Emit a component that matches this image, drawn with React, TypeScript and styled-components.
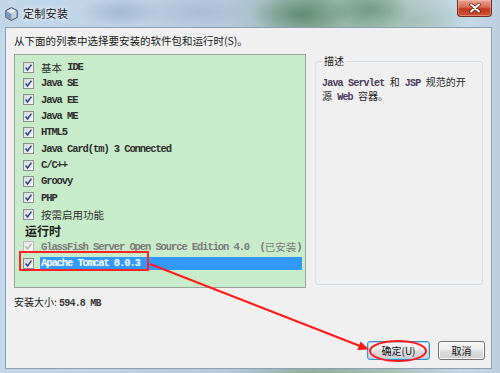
import React from 'react';
import styled, { createGlobalStyle } from 'styled-components';

const Global = createGlobalStyle`
  html, body { margin: 0; padding: 0; background: #fff; }
  body {
    width: 500px; height: 373px; overflow: hidden;
    font-family: "Noto Sans CJK SC", "Liberation Sans", sans-serif;
  }
`;

const Window = styled.div`
  position: relative;
  width: 500px;
  height: 373px;
  display: flex;
  flex-direction: column;
  overflow: hidden;
  background:
    radial-gradient(ellipse 40px 14px at 120px 12px, rgba(140,165,190,0.55), transparent),
    radial-gradient(ellipse 60px 16px at 200px 12px, rgba(150,170,195,0.45), transparent),
    radial-gradient(ellipse 50px 20px at 300px 14px, rgba(60,110,80,0.55), transparent),
    radial-gradient(ellipse 40px 20px at 370px 10px, rgba(70,120,90,0.5), transparent),
    radial-gradient(ellipse 50px 18px at 420px 20px, rgba(150,185,170,0.5), transparent),
    linear-gradient(90deg, #c3d7ea 0%, #bed3e8 20%, #b6cbe0 45%, #8fb09c 62%, #a6c2b6 78%, #c4d9e8 92%, #bcd0e2 100%);
`;

const TitleBar = styled.div`
  height: 27px;
  display: flex;
  align-items: flex-start;
  padding-left: 5px;
  flex-shrink: 0;
`;

const TitleIcon = styled.svg`
  width: 13px;
  height: 14px;
  margin-top: 7px;
  flex-shrink: 0;
`;

const TitleText = styled.div`
  margin-left: 5px;
  margin-top: 6px;
  font-size: 11px;
  line-height: 15px;
  color: #111;
  letter-spacing: 0.3px;
  text-shadow: 0 0 6px rgba(255,255,255,0.9), 0 0 3px rgba(255,255,255,0.9);
`;

const CloseButton = styled.div`
  margin-left: auto;
  margin-right: 8px;
  width: 35px;
  height: 17px;
  box-sizing: border-box;
  border: 1px solid #6e2b1f;
  border-top: none;
  border-radius: 0 0 4px 4px;
  background: linear-gradient(#e9a594 0%, #d86a52 45%, #c0391f 55%, #cf4f33 100%);
  box-shadow: inset 0 0 0 1px rgba(255,200,190,0.45);
  display: flex;
  align-items: center;
  justify-content: center;
`;

const Client = styled.div`
  flex: 1;
  margin: 0 8px 4px 5px;
  background: #f0f0f0;
  border: 1px solid #8d9fb2;
  display: flex;
  flex-direction: column;
  padding: 5px 6px 8px 8px;
  min-height: 0;
`;

const Instruction = styled.div`
  height: 16px;
  line-height: 16px;
  font-size: 10.5px;
  color: #1a1a1a;
`;

const MainRow = styled.div`
  display: flex;
  gap: 9px;
  margin-top: 5px;
  height: 234px;
`;

const ListBox = styled.div`
  width: 292px;
  box-sizing: border-box;
  border: 1px solid #9aa39a;
  background: #c8ecc9;
  padding: 4px 3px 0 8px;
  display: flex;
  flex-direction: column;
`;

const Row = styled.div`
  height: 16.33px;
  display: flex;
  align-items: center;
  gap: 6px;
`;

const Label = styled.div<{ $selected?: boolean; $disabled?: boolean }>`
  flex: 1;
  height: 13px;
  display: flex;
  align-items: center;
  padding-left: 1px;
  white-space: pre;
  font-family: "Liberation Mono", "Noto Sans CJK SC", monospace;
  font-weight: bold;
  font-size: 10.5px;
  letter-spacing: -1.1px;
  background: ${p => (p.$selected ? '#3399ff' : 'transparent')};
  color: ${p => (p.$selected ? '#ffffff' : p.$disabled ? '#7a7a7a' : '#2e2e2e')};
`;

const Cjk = styled.span`
  font-family: "Noto Sans CJK SC", sans-serif;
  font-weight: 400;
  letter-spacing: 0;
  font-size: 10.5px;
`;

const GroupHeader = styled.div`
  height: 16.33px;
  display: flex;
  align-items: center;
  padding-left: 2px;
  font-size: 12px;
  font-weight: bold;
  color: #1a1a1a;
`;

const DescPanel = styled.fieldset`
  margin: 1px 0 0 0;
  width: 168px;
  height: 230px;
  box-sizing: border-box;
  border: 1px solid #d5dce2;
  border-radius: 3px;
  padding: 9px 6px 0 6px;
  min-width: 0;
`;

const DescLegend = styled.legend`
  font-size: 10px;
  color: #1a1a1a;
  padding: 0 2px;
  margin-left: 0;
  line-height: 12px;
`;

const DescText = styled.div`
  font-size: 10px;
  line-height: 12px;
  color: #2a2a2a;
  white-space: pre;
`;

const Mono = styled.span<{ $color?: string }>`
  font-family: "Liberation Mono", monospace;
  font-weight: bold;
  font-size: 10px;
  line-height: 12px;
  letter-spacing: -0.8px;
  color: ${p => p.$color || '#4a3a5e'};
`;

const SizeLabel = styled.div`
  margin-top: 7px;
  height: 14px;
  line-height: 14px;
  font-size: 10px;
  color: #1a1a1a;
`;

const Spacer = styled.div`
  flex: 1;
`;

const ButtonRow = styled.div`
  display: flex;
  justify-content: flex-end;
  gap: 8px;
`;

const Button = styled.div<{ $width: number; $focused?: boolean }>`
  width: ${p => p.$width}px;
  height: 19px;
  box-sizing: border-box;
  border: 1px solid ${p => (p.$focused ? '#3c8dc8' : '#707070')};
  border-radius: 3px;
  background: linear-gradient(#f6f6f6 0%, #ebebeb 48%, #dcdcdc 52%, #d0d0d0 100%);
  box-shadow: inset 0 0 0 1px ${p => (p.$focused ? '#9fd6f5' : '#fcfcfc')};
  display: flex;
  align-items: center;
  justify-content: center;
  font-size: 10px;
  color: #111;
`;

const Overlay = styled.svg`
  position: absolute;
  left: 0;
  top: 0;
  width: 500px;
  height: 373px;
  pointer-events: none;
`;

const CheckBox: React.FC<{ disabled?: boolean }> = ({ disabled }) => (
  <svg width="11" height="11" viewBox="0 0 11 11" style={{ flexShrink: 0 }}>
    <defs>
      <linearGradient id={disabled ? 'cbd' : 'cb'} x1="0" y1="0" x2="1" y2="1">
        <stop offset="0" stopColor={disabled ? '#e6e6e6' : '#d6d6d6'} />
        <stop offset="1" stopColor="#fbfbfb" />
      </linearGradient>
    </defs>
    <rect x="0.5" y="0.5" width="10" height="10" fill={`url(#${disabled ? 'cbd' : 'cb'})`} stroke={disabled ? '#bcbcbc' : '#8e8f8f'} />
    <path d="M2.6 5.6 L4.6 8 L8.4 2.6" fill="none" stroke={disabled ? '#b4b4b4' : '#2b47a0'} strokeWidth="1.6" />
  </svg>
);

type Item = { label: React.ReactNode };

const items: Item[] = [
  { label: <><Cjk>基本</Cjk> IDE</> },
  { label: 'Java SE' },
  { label: 'Java EE' },
  { label: 'Java ME' },
  { label: 'HTML5' },
  { label: 'Java Card(tm) 3 Connected' },
  { label: 'C/C++' },
  { label: 'Groovy' },
  { label: 'PHP' },
  { label: <Cjk>按需启用功能</Cjk> },
];

export default function App() {
  return (
    <>
      <Global />
      <Window>
        <TitleBar>
          <TitleIcon viewBox="0 0 13 14">
            <path d="M6.5 0.6 L12.2 3.6 L12.2 10.4 L6.5 13.4 L0.8 10.4 L0.8 3.6 Z" fill="#a9bdd2" stroke="#3c5068" strokeWidth="1" strokeLinejoin="round" />
            <path d="M6.5 1.6 L11.2 4 L6.5 6.5 L1.8 4 Z" fill="#e4edf6" />
            <path d="M1.8 4.6 L6 6.9 L6 12.3 L1.8 10 Z" fill="#7f98b4" />
            <path d="M7 6.9 L11.2 4.6 L11.2 10 L7 12.3 Z" fill="#c3d3e3" />
          </TitleIcon>
          <TitleText>定制安装</TitleText>
          <CloseButton>
            <svg width="12" height="10" viewBox="0 0 12 10">
              <path d="M2 1.5 L10 8.5 M10 1.5 L2 8.5" stroke="#5a1d12" strokeWidth="3.4" strokeLinecap="round" />
              <path d="M2 1.5 L10 8.5 M10 1.5 L2 8.5" stroke="#ffffff" strokeWidth="2" strokeLinecap="round" />
            </svg>
          </CloseButton>
        </TitleBar>
        <Client>
          <Instruction>从下面的列表中选择要安装的软件包和运行时(S)。</Instruction>
          <MainRow>
            <ListBox>
              {items.map((it, i) => (
                <Row key={i}>
                  <CheckBox />
                  <Label>{it.label}</Label>
                </Row>
              ))}
              <GroupHeader>运行时</GroupHeader>
              <Row>
                <CheckBox disabled />
                <Label $disabled>GlassFish Server Open Source Edition 4.0  (<Cjk>已安装</Cjk>)</Label>
              </Row>
              <Row>
                <CheckBox />
                <Label $selected>Apache Tomcat 8.0.3</Label>
              </Row>
            </ListBox>
            <DescPanel>
              <DescLegend>描述</DescLegend>
              <DescText>
                <Mono>Java Servlet </Mono>和<Mono> JSP </Mono>规范的开
                {'\n'}
                源<Mono> Web </Mono>容器。
              </DescText>
            </DescPanel>
          </MainRow>
          <SizeLabel>
            安装大小: <Mono $color="#3a3a3a">594.8 MB</Mono>
          </SizeLabel>
          <Spacer />
          <ButtonRow>
            <Button $width={63} $focused>确定(U)</Button>
            <Button $width={47}>取消</Button>
          </ButtonRow>
        </Client>
        <Overlay viewBox="0 0 500 373">
          <rect x="20" y="252" width="128" height="18" fill="none" stroke="#ff2222" strokeWidth="2" />
          <line x1="150" y1="264" x2="360" y2="346" stroke="#ff1a1a" strokeWidth="2" />
          <polygon points="369,349.5 357.2,350 360.6,341.4" fill="#ff1a1a" />
          <ellipse cx="398" cy="351" rx="28" ry="10" fill="none" stroke="#ff1a1a" strokeWidth="2" />
        </Overlay>
      </Window>
    </>
  );
}
